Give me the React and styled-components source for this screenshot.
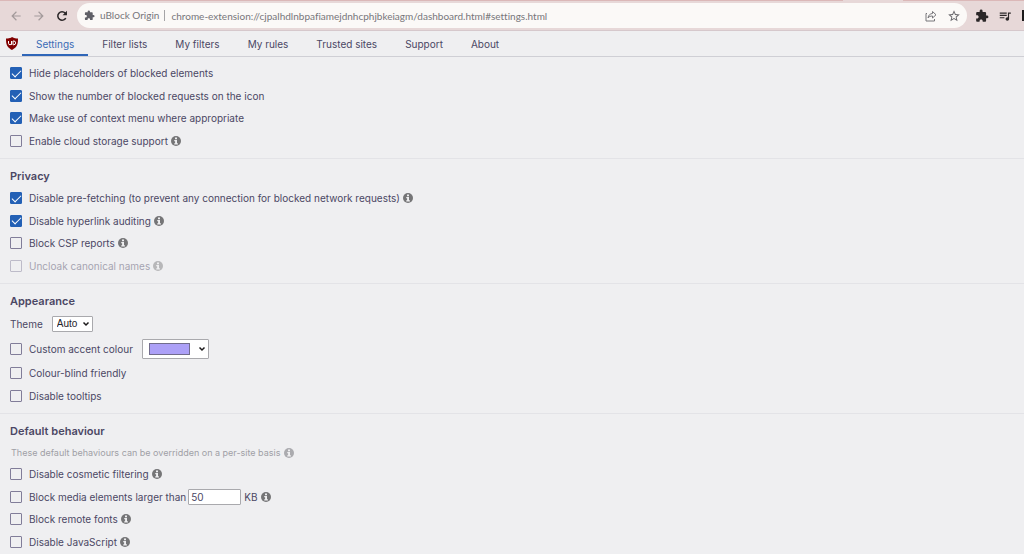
import styled, { createGlobalStyle } from 'styled-components';
import {
  MdArrowBack,
  MdArrowForward,
  MdExtension,
  MdStarBorder,
  MdQueueMusic,
} from 'react-icons/md';

const GlobalStyle = createGlobalStyle`
  * {
    box-sizing: border-box;
  }

  body {
    margin: 0;
    overflow: hidden;
    background-color: #efeff1;
    color: #4b4764;
    font-family: Inter, 'Liberation Sans', sans-serif;
    font-size: 10px;
    line-height: 16px;
  }
`;

const TabStrip = styled.div`
  display: flex;
  justify-content: flex-end;
  height: 1px;
  padding-right: 121px;
  background-color: #dbb8b8;
`;

const ActiveWindowTab = styled.span`
  width: 60px;
  background-color: #e7d8d8;
`;

const Toolbar = styled.div`
  display: flex;
  align-items: center;
  height: 30px;
  padding: 2px 0 2px 4px;
  background-color: #e7d8d8;
  border-bottom: 1px solid #d6c8cc;
`;

const ToolButton = styled.button`
  display: flex;
  align-items: center;
  justify-content: center;
  flex: none;
  width: 23px;
  height: 24px;
  padding: 0;
  border: 0;
  background: none;
  color: ${({ $color }) => $color || '#2b2728'};
  font-size: 14px;
`;

const AddressBar = styled.div`
  display: flex;
  align-items: center;
  flex: 1;
  min-width: 0;
  height: 25px;
  margin-left: 4px;
  padding: 0 2px 0 7px;
  border-radius: 13px;
  background-color: #fbf9f7;
  color: #77767a;
  font-family: Lato, 'Open Sans', sans-serif;
  font-variant-ligatures: none;
`;

const SiteIcon = styled.span`
  display: flex;
  margin-right: 5px;
  color: #5f5f66;
  font-size: 11px;
`;

const SiteName = styled.span`
  padding-right: 5px;
  border-right: 1px solid #a5a4a6;
  line-height: 11px;
  white-space: nowrap;
`;

const Url = styled.input`
  flex: 1;
  min-width: 0;
  padding: 0 0 0 6px;
  border: 0;
  outline: 0;
  background: none;
  color: #77767a;
  font: inherit;
`;

const Extensions = styled.div`
  display: flex;
  align-items: center;
  margin-left: 3px;
`;

const ExtensionEdge = styled.span`
  width: 2px;
  height: 11px;
  margin-left: 6px;
  background-color: #1c1a1b;
`;

const Tabs = styled.nav`
  display: flex;
  align-items: stretch;
  height: 26px;
  padding-left: 6px;
  border-bottom: 1px solid #cfcfd5;
`;

const Logo = styled.svg`
  align-self: center;
  width: 12px;
  height: 13px;
  margin-right: 4px;
`;

const Tab = styled.a`
  padding: 5px 14px 0;
  border-bottom: 2px solid ${({ $active }) => ($active ? '#2f66b8' : 'transparent')};
  color: ${({ $active }) => ($active ? '#3a6cb6' : '#4b4764')};
  text-decoration: none;
  white-space: nowrap;
`;

const Section = styled.section`
  padding: 5px 10px 6px;
  border-bottom: 1px solid #e3e3e7;
`;

const Heading = styled.h2`
  margin: 0;
  padding-top: 2px;
  font-size: 11px;
  font-weight: 600;
  line-height: 21px;
`;

const Note = styled.p`
  display: flex;
  align-items: center;
  gap: 4px;
  height: 21px;
  margin: 0;
  padding-left: 1px;
  color: #a09fa6;
  font-size: 9px;
`;

const List = styled.ul`
  margin: 0;
  padding: 0;
  list-style: none;
`;

const Row = styled.li`
  display: flex;
  align-items: center;
  min-height: 22px;
  opacity: ${({ $dim }) => ($dim ? 0.45 : 1)};

  &:nth-child(even) {
    min-height: 23px;
  }
`;

const Label = styled.label`
  display: flex;
  align-items: center;
  gap: 7px;
`;

const Checkbox = styled.input`
  appearance: none;
  display: grid;
  place-content: center;
  width: 12px;
  height: 12px;
  margin: 0;
  border: 1px solid #817d99;
  border-radius: 1px;

  &:checked {
    border-color: #2360b5;
    background-color: #2360b5;
  }

  &:checked::before {
    content: '';
    width: 8px;
    height: 4px;
    border: solid #fff;
    border-width: 0 0 1px 1px;
    transform: translateY(-1px) rotate(-45deg);
  }
`;

const ThemeLabel = styled.label`
  margin-right: 9px;
`;

const ThemeRow = styled(Row)`
  min-height: 24px;
`;

const AccentRow = styled(Row)`
  &:nth-child(even) {
    min-height: 26px;
  }
`;

const SelectBox = styled.span`
  display: grid;
  align-items: center;

  > * {
    grid-area: 1 / 1;
  }

  svg {
    justify-self: end;
    width: 8px;
    height: 6px;
    margin-right: 3px;
    pointer-events: none;
  }
`;

const Select = styled.select`
  appearance: none;
  width: 41px;
  height: 16px;
  padding: 0 4px;
  border: 1px solid #a9a9ad;
  border-radius: 1px;
  background-color: #fff;
  color: #25242b;
  font-family: 'Liberation Sans', Arial, sans-serif;
  font-size: 10px;
  line-height: 14px;
`;

const ColourInput = styled.input`
  appearance: none;
  width: 67px;
  height: 20px;
  margin-left: 9px;
  padding: 3px 18px 3px 6px;
  border: 1px solid #a9a9ad;
  border-radius: 1px;
  background-color: #fff;

  &::-webkit-color-swatch-wrapper {
    padding: 0;
  }

  &::-webkit-color-swatch {
    border: 1px solid #716c8c;
    border-radius: 0;
  }
`;

const SizeInput = styled.input`
  width: 53px;
  height: 16px;
  margin: 0 3px 0 2px;
  padding: 0 2px;
  border: 1px solid #a9a9ad;
  border-radius: 1px;
  background-color: #fff;
  color: #4b4764;
  font: inherit;
`;

const Info = styled.svg`
  flex: none;
  width: 10px;
  height: 10px;
  margin-left: ${({ $tight }) => ($tight ? 0 : '3px')};
  color: ${({ $tight }) => ($tight ? '#ababaf' : '#757577')};
`;

function InfoIcon({ tight }) {
  return (
    <Info $tight={tight} viewBox="0 0 20 20" aria-label="More information">
      <circle cx="10" cy="10" r="10" fill="currentColor" />
      <path d="M8 3h4v3.4H8zM6.5 8H12v6.5h1.8V17H6.5v-2.5h1.7v-4H6.5z" fill="#efeff1" />
    </Info>
  );
}

function Chevron() {
  return (
    <svg viewBox="0 0 16 12" aria-hidden="true">
      <path d="M3 3l5 5 5-5" fill="none" stroke="#1c1a1b" strokeWidth="3" />
    </svg>
  );
}

function ReloadIcon() {
  return (
    <svg width="14" height="14" viewBox="0 0 24 24" fill="none" stroke="currentColor" strokeWidth="2.6">
      <path d="M18.500 15.500a7.300 7.300 0 1 1-1-8.500l2 2" />
      <path d="M20.500 3v7.500H13z" fill="currentColor" stroke="none" />
    </svg>
  );
}

function ShareIcon() {
  return (
    <svg width="12" height="12" viewBox="0 0 24 24" fill="none" stroke="currentColor" strokeWidth="2">
      <path d="M4 7H2v15h17v-4" />
      <path d="M15 3l7 6.500-7 6.500v-4c-4 0-7 1-9 4 1-6 4-8.500 9-9z" strokeLinejoin="round" />
    </svg>
  );
}

function Option({ label, checked, disabled, info, children }) {
  return (
    <Row $dim={disabled}>
      <Label>
        <Checkbox type="checkbox" defaultChecked={checked} disabled={disabled} />
        {label}
      </Label>
      {children}
      {info && <InfoIcon />}
    </Row>
  );
}

const tabs = ['Settings', 'Filter lists', 'My filters', 'My rules', 'Trusted sites', 'Support', 'About'];

const generalOptions = [
  { label: 'Hide placeholders of blocked elements', checked: true },
  { label: 'Show the number of blocked requests on the icon', checked: true },
  { label: 'Make use of context menu where appropriate', checked: true },
  { label: 'Enable cloud storage support', info: true },
];

const privacyOptions = [
  {
    label: 'Disable pre-fetching (to prevent any connection for blocked network requests)',
    checked: true,
    info: true,
  },
  { label: 'Disable hyperlink auditing', checked: true, info: true },
  { label: 'Block CSP reports', info: true },
  { label: 'Uncloak canonical names', disabled: true, info: true },
];

function BrowserToolbar() {
  return (
    <Toolbar>
      <ToolButton $color="#a39a9b" aria-label="Back">
        <MdArrowBack />
      </ToolButton>
      <ToolButton $color="#a39a9b" aria-label="Forward">
        <MdArrowForward />
      </ToolButton>
      <ToolButton aria-label="Reload">
        <ReloadIcon />
      </ToolButton>
      <AddressBar>
        <SiteIcon>
          <MdExtension />
        </SiteIcon>
        <SiteName>uBlock Origin</SiteName>
        <Url
          aria-label="Address"
          defaultValue="chrome-extension://cjpalhdlnbpafiamejdnhcphjbkeiagm/dashboard.html#settings.html"
        />
        <ToolButton $color="#77767a" aria-label="Share">
          <ShareIcon />
        </ToolButton>
        <ToolButton $color="#68676c" aria-label="Bookmark">
          <MdStarBorder />
        </ToolButton>
      </AddressBar>
      <Extensions>
        <ToolButton aria-label="Extensions">
          <MdExtension />
        </ToolButton>
        <ToolButton aria-label="Media">
          <MdQueueMusic />
        </ToolButton>
        <ExtensionEdge />
      </Extensions>
    </Toolbar>
  );
}

function App() {
  return (
    <>
      <GlobalStyle />
      <TabStrip>
        <ActiveWindowTab />
      </TabStrip>
      <BrowserToolbar />
      <Tabs>
        <Logo viewBox="0 0 24 26" aria-label="uBlock Origin">
          <path d="M12 0c4 3 8 3 12 3 0 11-1 17-12 23C1 20 0 14 0 3c4 0 8 0 12-3z" fill="#800000" />
          <path
            d="M5 8v4.500a3 3 0 0 0 6 0V8M11 8v7.500M14 8v7.500h1.500a3.700 3.700 0 0 0 0-7.500z"
            fill="none"
            stroke="#fff"
            strokeWidth="2"
          />
        </Logo>
        {tabs.map((tab, index) => (
          <Tab key={tab} href="#" $active={index === 0}>
            {tab}
          </Tab>
        ))}
      </Tabs>
      <main>
        <Section>
          <List>
            {generalOptions.map((option) => (
              <Option key={option.label} {...option} />
            ))}
          </List>
        </Section>
        <Section>
          <Heading>Privacy</Heading>
          <List>
            {privacyOptions.map((option) => (
              <Option key={option.label} {...option} />
            ))}
          </List>
        </Section>
        <Section>
          <Heading>Appearance</Heading>
          <List>
            <ThemeRow>
              <ThemeLabel htmlFor="theme">Theme</ThemeLabel>
              <SelectBox>
                <Select id="theme" defaultValue="Auto">
                  <option>Auto</option>
                  <option>Light</option>
                  <option>Dark</option>
                </Select>
                <Chevron />
              </SelectBox>
            </ThemeRow>
            <AccentRow>
              <Label>
                <Checkbox type="checkbox" />
                Custom accent colour
              </Label>
              <SelectBox>
                <ColourInput type="color" defaultValue="#aca0f7" aria-label="Accent colour" />
                <Chevron />
              </SelectBox>
            </AccentRow>
            <Option label="Colour-blind friendly" />
            <Option label="Disable tooltips" />
          </List>
        </Section>
        <Section>
          <Heading>Default behaviour</Heading>
          <Note>
            These default behaviours can be overridden on a per-site basis
            <InfoIcon tight />
          </Note>
          <List>
            <Option label="Disable cosmetic filtering" info />
            <Option label="Block media elements larger than" info>
              <SizeInput type="text" defaultValue="50" aria-label="Size in KB" />
              KB
            </Option>
            <Option label="Block remote fonts" info />
            <Option label="Disable JavaScript" info />
          </List>
        </Section>
      </main>
    </>
  );
}

export default App;
